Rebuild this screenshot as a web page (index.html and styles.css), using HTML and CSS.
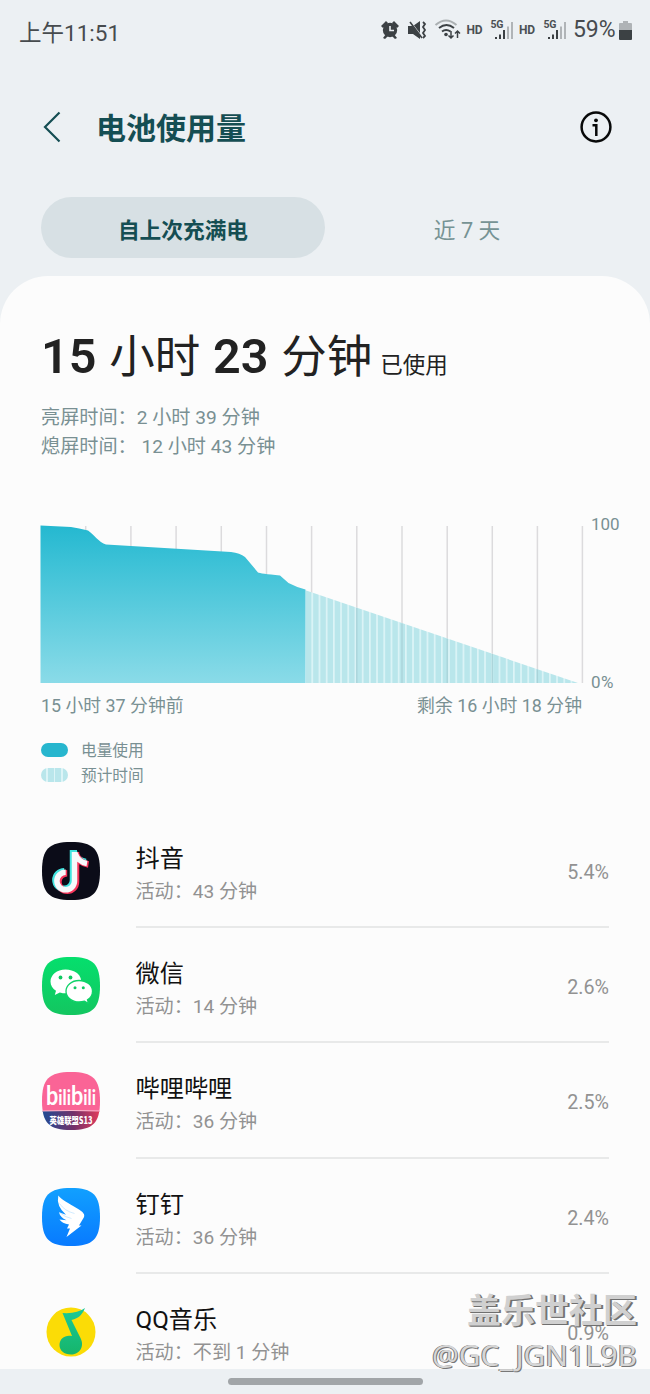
FILE: index.html
```html
<!DOCTYPE html>
<html lang="zh-CN">
<head>
<meta charset="utf-8">
<title>电池使用量</title>
<link rel="stylesheet" href="styles.css">
</head>
<body>
<div class="screen">
  <header class="status">
    <span class="clock">上午11:51</span>
    <svg class="status-icons" width="190" height="30" viewBox="380 15 190 30">
      <g fill="#3c4144">
        <circle cx="390" cy="30" r="7.2"/>
        <path d="M381 26l5-5 2 2-5 5zM399 26l-5-5-2 2 5 5zM383 38l3-4 2 2-3 3zM397 38l-3-4-2 2 3 3z"/>
        <path d="M390 26v4.5h4" fill="none" stroke="#ecf0f3" stroke-width="1.6"/>
        <path d="M408 26h5l7-5v18l-7-5h-5z"/>
        <path d="M409 20l13 17" stroke="#ecf0f3" stroke-width="1.4"/>
        <path d="M410 22l12 16" stroke="#3c4144" stroke-width="1.5"/>
        <path d="M423 22l2 2-2 3 2 3-2 3 2 3-2 2" fill="none" stroke="#3c4144" stroke-width="1.8"/>
        <circle cx="446" cy="34.500" r="1.800"/>
        <g fill="none" stroke-width="2">
          <path d="M435.500 25q10.500-9 21 0" stroke="#abb0b2"/>
          <path d="M439 28q7.500-6 15 0M442 31.500q4-3 8.500 0" stroke="#3c4144"/>
          <path d="M451 31v7M448.500 35.500l2.500 2.500 2.500-2.500M457.500 38v-7M455 33.500l2.500-2.500 2.500 2.500" stroke="#3c4144" stroke-width="1.500"/>
        </g>
        <g id="signal"><path d="M495 37h2v2h-2zM499 34.500h2v4.500h-2zM503 30h2v9h-2z"/><path d="M507 26.500h2v12.500h-2zM511 22h2v17h-2z" fill="#b0b4b7"/></g>
        <use href="#signal" x="53"/>
      </g>
      <g class="status-label"><text x="466.500" y="34" textLength="16">HD</text><text x="519" y="34" textLength="16">HD</text><text class="net" x="490.500" y="28" textLength="13">5G</text><text class="net" x="543.500" y="28" textLength="13">5G</text></g>
    </svg>
    <span class="battery-text">59%</span>
    <svg class="battery" width="13" height="19" viewBox="0 0 13 19"><path d="M4 0h5v2h3q1 0 1 1v7H0V3q0-1 1-1h3z" fill="#afb3b6"/><path d="M0 9h13v9q0 1-1 1H1q-1 0-1-1z" fill="#3c4144"/></svg>
  </header>

  <div class="titlebar">
    <svg class="back" width="20" height="34" viewBox="0 0 20 34"><path d="M17.500 2.500L3 17l14.500 14.500" fill="none" stroke="#154e53" stroke-width="2.200"/></svg>
    <h1>电池使用量</h1>
    <svg width="32" height="32" viewBox="0 0 32 32"><circle cx="16" cy="16" r="14.400" fill="none" stroke="#080909" stroke-width="2.500"/><circle cx="16" cy="9.300" r="1.900" fill="#080909"/><path d="M12.500 14.300H16.300V25" fill="none" stroke="#080909" stroke-width="2.500"/></svg>
  </div>

  <nav class="tabs">
    <span class="tab active">自上次充满电</span>
    <span class="tab">近 7 天</span>
  </nav>

  <main class="panel">
    <h2 class="total"><b>15</b> 小时 <b>23</b> 分钟<small>已使用</small></h2>
    <p class="times">亮屏时间：2 小时 39 分钟<br>熄屏时间：&nbsp;12 小时 43 分钟</p>

    <section class="chart">
      <svg class="plot" width="544" height="160" viewBox="40 524 544 160">
        <defs>
          <linearGradient id="used" x1="0" y1="0" x2="0" y2="1"><stop stop-color="#24b8d0"/><stop offset=".25" stop-color="#3ec2d7"/><stop offset="1" stop-color="#8adbe8"/></linearGradient>
          <pattern id="stripes" width="7.200" height="200" patternUnits="userSpaceOnUse" x="304.200" y="500"><rect width="7.200" height="200" fill="#b9e6eb"/><rect width="1.700" height="200" fill="#dcf4f7"/></pattern>
        </defs>
        <path d="M85.700 526v157M130.900 526v157M176.100 526v157M221.300 526v157M266.500 526v157M311.600 526v157M356.800 526v157M402 526v157M447.200 526v157M492.300 526v157M537.400 526v157M582.400 526v157" stroke="#dcdbdd" stroke-width="1.500"/>
        <path d="M305.500 590.300L578 683H305.500z" fill="url(#stripes)"/>
        <path d="M356.800 608v75M402 623.500v59.500M447.200 639v44M492.300 654v29M537.400 669.500v13.500" stroke="#a9d3d9" stroke-width="1.300"/>
        <path d="M40.500 525.500L71 527q8 1 17 3.500c5 3 11 12 18 14l125 7.500q9 1 14 5l13 15.500q2 1 22 3l8.500 7.500q7 3.800 17 6.500V683H40.500z" fill="url(#used)"/>
      </svg>
      <div class="scale"><span>100</span><span class="zero">0%</span></div>
    </section>
    <div class="range"><span>15 小时 37 分钟前</span><span>剩余 16 小时 18 分钟</span></div>

    <div class="legend">
      <div><i class="key"></i>电量使用</div>
      <div><i class="key estimate"></i>预计时间</div>
    </div>

    <ul class="apps">
      <li>
        <svg class="icon" viewBox="0 0 58 58"><path fill="#0b0c18" d="M29 0C51 0 58 7 58 29S51 58 29 58 0 51 0 29 7 0 29 0z"/><g fill="none" stroke-width="6.500"><path d="M31 8v30a8.800 8.800 0 1 1-8.800-8.800M31.500 9q3 10 12.500 11" stroke="#42e3df"/><path d="M34 10v30a8.800 8.800 0 1 1-8.800-8.800M34 12q3 9 12.500 10.500" stroke="#f7355b"/><path d="M32.500 10v29a8.800 8.800 0 1 1-8.800-8.800M33 11q3 9 12 10.500" stroke="#f7f9fb" stroke-width="5.500"/></g></svg>
        <div class="info"><h3>抖音</h3><p>活动：43 分钟</p></div><span class="percent">5.4%</span>
      </li>
      <li>
        <svg class="icon" viewBox="0 0 58 58"><defs><linearGradient id="wx" x1="0" y1="0" x2="0" y2="1"><stop stop-color="#05df6d"/><stop offset="1" stop-color="#13c660"/></linearGradient></defs><path fill="url(#wx)" d="M29 0C51 0 58 7 58 29S51 58 29 58 0 51 0 29 7 0 29 0z"/><path fill="#fff" d="M23.500 12.500C15 12.500 8.500 18 8.500 24.500c0 4 2 7 5.500 9.300L12.800 38l5-2.600q7 2 13-.5C40 31 42 22 35 16q-5-3.500-11.500-3.500z"/><path fill="#fff" stroke="#0ed268" stroke-width="1.300" d="M37 23.500c-7.500 0-13 5-13 10.700C24 40 29.500 45 37 45q3 0 5.500-.8l4 2.300-1-3.700c3.200-2 5-5 5-8.600 0-6-6-10.700-13.500-10.700z"/><g fill="#10c962"><circle cx="18.500" cy="20.500" r="1.900"/><circle cx="28.500" cy="20.500" r="1.900"/><circle cx="33" cy="30.800" r="1.500"/><circle cx="41.300" cy="30.800" r="1.500"/></g></svg>
        <div class="info"><h3>微信</h3><p>活动：14 分钟</p></div><span class="percent">2.6%</span>
      </li>
      <li>
        <svg class="icon" viewBox="0 0 58 58"><defs><clipPath id="tile"><path d="M29 0C51 0 58 7 58 29S51 58 29 58 0 51 0 29 7 0 29 0z"/></clipPath><linearGradient id="band"><stop stop-color="#1e4b94"/><stop offset=".55" stop-color="#733069"/><stop offset="1" stop-color="#e33b5c"/></linearGradient></defs><g clip-path="url(#tile)"><path fill="#fa6496" d="M0 0h58v40H0z"/><path fill="url(#band)" d="M0 39h58v19H0z"/><path d="M0 39q29-1 58 0" stroke="#f7b9ce" fill="none"/></g><text class="bili-logo" x="4" y="33" textLength="50" lengthAdjust="spacingAndGlyphs"><tspan class="big">b</tspan>ili<tspan class="big">b</tspan>ili</text><text class="bili-text" x="7.500" y="51.500" textLength="43" lengthAdjust="spacingAndGlyphs">英雄联盟S13</text></svg>
        <div class="info"><h3>哔哩哔哩</h3><p>活动：36 分钟</p></div><span class="percent">2.5%</span>
      </li>
      <li>
        <svg class="icon" viewBox="0 0 58 58"><defs><linearGradient id="ding" x1="0" y1="0" x2="0" y2="1"><stop stop-color="#11a0ff"/><stop offset="1" stop-color="#087aff"/></linearGradient></defs><path fill="url(#ding)" d="M29 0C51 0 58 7 58 29S51 58 29 58 0 51 0 29 7 0 29 0z"/><path fill="#fff" d="M16.300 7.500c3 4 10 7.500 19 13 6 3.500 8 6 6.500 9l-4.800 8h2.500L24.500 49l3.500-8.500h-3l2-4q-7-1-9.500-5l7 .8q-6.500-3-7.500-8l7 2.500Q14 18 16.300 7.500z"/><path d="M17.500 15.500q5 7.500 15 10M17.500 24.500q6 5 12 6" fill="none" stroke="#8accff" stroke-width=".4"/></svg>
        <div class="info"><h3>钉钉</h3><p>活动：36 分钟</p></div><span class="percent">2.4%</span>
      </li>
      <li>
        <svg class="icon" viewBox="0 0 58 58"><defs><linearGradient id="note" x1="0" y1="0" x2="0" y2="1"><stop stop-color="#1ac997"/><stop offset="1" stop-color="#16b56b"/></linearGradient></defs><circle cx="29" cy="29" r="24.500" fill="#fbdc06"/><path fill="url(#note)" d="M43 5c-3 7-6 10-13.500 12l9 18C43 44 37 51.500 29 51.500c-7 0-11.500-4-11.500-9.500 0-7 6-10.500 12.500-9L20.500 10Q35 11 43 5z"/></svg>
        <div class="info"><h3>QQ音乐</h3><p>活动：不到 1 分钟</p></div><span class="percent">0.9%</span>
      </li>
    </ul>
  </main>
  <footer class="navigation"><i></i></footer>
  <div class="watermark"><strong>盖乐世社区</strong><span>@GC_JGN1L9B</span></div>
</div>
</body>
</html>
```
FILE: styles.css
```css
* { box-sizing: border-box; }
body, h1, h2, h3, p, ul { margin: 0; padding: 0; }
body { background: #ecf0f3; font-family: Roboto, "Noto Sans CJK SC", sans-serif; }
.screen { position: relative; width: 650px; height: 1394px; overflow: hidden; display: flex; flex-direction: column; }
.status { height: 60px; flex: none; display: flex; align-items: center; padding: 0 18px 0 19px; color: #474b4e; font-size: 22.500px; }
.clock { flex: 1; line-height: 30px; padding-top: 5px; }
.status-icons { display: block; flex: none; }
.status-label { font: 700 12px Roboto, sans-serif; fill: #4b5053; }
.status-label .net { font-size: 10.500px; }
.battery-text { width: 49px; padding-left: 3px; line-height: 32px; font-size: 23px; letter-spacing: -.1px; }
.battery { display: block; }
.titlebar { height: 137px; flex: none; padding: 0 38px 0 42px; display: flex; align-items: center; }
.titlebar h1 { flex: 1; margin-left: 34px; color: #154e53; font-size: 30px; line-height: 40px; font-weight: 700; }
.titlebar svg { margin-bottom: 4px; }
.tabs { height: 61px; flex: none; display: grid; grid-template-columns: 284px 284px; padding-left: 41px; }
.tab { height: 61px; border-radius: 31px; text-align: center; font-size: 21.700px; line-height: 67px; color: #769394; }
.tab.active { background: #d7e0e4; color: #154e53; font-weight: 700; }
.panel { margin-top: 18px; height: 1093px; flex: none; overflow: hidden; background: #fcfcfc; border-radius: 48px 48px 0 0; padding: 0 41px; }
.total { padding-top: 49px; height: 127px; white-space: nowrap; color: #222; font-size: 45.500px; line-height: 64px; font-weight: 400; word-spacing: 1.500px; }
.total b { font-size: 48.500px; font-weight: 600; }
.total small { font-size: 22.500px; margin-left: 8px; }
.times { color: #799093; font-size: 19.150px; line-height: 29.300px; height: 121px; }
.chart { display: flex; height: 160px; margin-left: -1px; }
.plot { flex: none; display: block; }
.scale { margin: -10px 0 -8px 7px; display: flex; flex-direction: column; justify-content: space-between; color: #799093; font-size: 17px; line-height: 20px; }
.zero { letter-spacing: .5px; }
.range { display: flex; justify-content: space-between; width: 541px; color: #799093; font-size: 17.850px; line-height: 26px; margin-top: 9px; }
.legend { padding-top: 20px; color: #799093; font-size: 15.700px; line-height: 24.700px; height: 94px; }
.legend div { display: flex; align-items: center; gap: 13px; }
.key { width: 27px; height: 14px; border-radius: 7px; margin-bottom: 3px; background: #27b6ce; }
.key.estimate { background: repeating-linear-gradient(90deg, #b9e6eb 0 5.500px, #dcf4f7 5.500px 7.200px); }
.apps { list-style: none; }
.apps li { display: grid; grid-template: 113.200px 2px / 94.500px 1fr auto; }
.apps li::after { content: ""; grid-area: 2 / 2 / 3 / 4; background: #e8e9e9; }
.icon { width: 58px; height: 58px; margin: 29px 0 0 1px; }
.info { padding-top: 29px; }
.info h3 { color: #111; font-weight: 400; font-size: 24.200px; line-height: 34px; }
.info p { color: #929292; font-size: 19.100px; line-height: 32px; }
.percent { color: #929292; font-size: 19.700px; line-height: 24px; padding-top: 48px; }
.bili-logo { font: 700 21px Lato, sans-serif; fill: #fff; }
.bili-logo .big { font-size: 27px; }
.bili-text { font: 900 9.500px "Noto Sans CJK SC", sans-serif; fill: #fff; }
.navigation { flex: 1; display: flex; justify-content: center; padding-top: 9px; }
.navigation i { width: 195px; height: 7px; border-radius: 4px; background: #a1a5a8; }
.watermark { position: absolute; right: 13px; bottom: 18px; display: flex; flex-direction: column; align-items: flex-end; color: #d0d0d0; text-shadow: 1px 1px 0 #6f6f6f, 2px 1px 0 #777; }
.watermark strong { font-size: 34px; line-height: 46px; }
.watermark span { font: 29.800px/42px "Noto Sans", sans-serif; color: #d6d6d6; text-shadow: -1px 0 0 #777, 1px 1px 0 #777; }
```
